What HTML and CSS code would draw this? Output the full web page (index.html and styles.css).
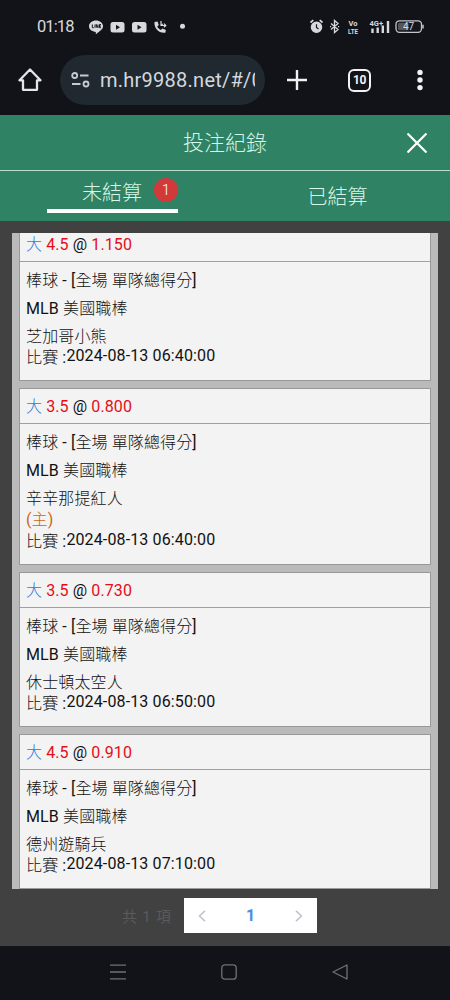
FILE: index.html
```html
<!DOCTYPE html>
<html lang="zh-Hant">
  <head>
    <meta charset="UTF-8" />
    <meta name="viewport" content="width=device-width, initial-scale=1.0" />
    <title>投注紀錄</title>
    <link rel="stylesheet" href="styles.css">
  </head>
  <body>
    <div class="status-bar">
      <span class="clock">01:18</span>
      <svg class="status-left" width="100" height="16" viewBox="0 0 100 16">
        <path fill="#d8d9dc" d="M7 1.5c4 0 7 2.5 7 5.8 0 3.200-3.500 5-6.500 7.400-.6.4-.9.1-.8-.5l.2-1.200C3 12.700 0 10.400 0 7.300 0 4 3 1.500 7 1.500z" />
        <path stroke="#15161b" stroke-width="1" fill="none" d="M3.300 5.500v3.200h1.500M6 5.500v3.200M7.300 8.700V5.500l1.700 3.200V5.500M12 5.500h-1.500v3.200H12M10.500 7.100H12" />
        <rect x="21.500" y="3" width="14" height="10.500" rx="2.500" fill="#d8d9dc" />
        <path d="M27 5.800v5l4-2.500z" fill="#15161b" />
        <rect x="43" y="3" width="14.500" height="10.500" rx="2.500" fill="#d8d9dc" />
        <path d="M48.500 5.800v5l4-2.500z" fill="#15161b" />
        <path fill="#d8d9dc" d="M65.500 3l3-.5 1.300 3.600-1.600 1.500c.9 1.700 2 2.700 3.600 3.500l1.600-1.600 3.500 1.500-.6 2.700c-6 1-11.500-4.500-10.800-10.700z" />
        <path stroke="#d8d9dc" stroke-width="1.200" fill="none" d="M72 2v4.500h4.500M72.300 6.300l1.500-1.500M75 4.700l1.800 1.800L75 8.200" />
        <circle cx="93.500" cy="7.200" r="2.500" fill="#d8d9dc" />
      </svg>
      <svg class="status-right" width="116" height="18" viewBox="0 0 116 18">
        <circle cx="7.500" cy="9.200" r="5" fill="#d8d9dc" stroke="#d8d9dc" stroke-width="1.500" />
        <path d="M7.500 6.200v3.200l2 1.500" fill="none" stroke="#15161b" stroke-width="1.200" />
        <path d="M1.500 4.500L4.300 2.200M13.500 4.500l-2.800-2.300" stroke="#d8d9dc" stroke-width="1.700" />
        <path d="M22 5.500l7 6-3.500 3V2.500l3.500 3-7 6M21 8.600h1.200M29 8.600h1.200" fill="none" stroke="#d8d9dc" stroke-width="1.300" />
        <text class="tiny" x="39.500" y="7.500" textLength="9" lengthAdjust="spacingAndGlyphs">Vo</text>
        <text class="tiny" x="39" y="15.500" textLength="10" lengthAdjust="spacingAndGlyphs">LTE</text>
        <text class="tiny" x="60.500" y="7.500" textLength="13.500" lengthAdjust="spacingAndGlyphs">4G+</text>
        <path d="M63.500 10.500v4.500M68.700 9.500v5.500M73.800 7.500v7.500M79 3v12" stroke="#d8d9dc" stroke-width="2.400" />
        <rect x="87" y="2.800" width="25.500" height="11.500" rx="3.500" fill="#15161b" stroke="#c4c5c8" stroke-width="1.300" />
        <rect x="89" y="4.800" width="10.500" height="7.500" rx="1.500" fill="#55565b" />
        <path d="M114 6.800v3.600" stroke="#c4c5c8" stroke-width="1.500" />
        <text class="battery" x="94" y="12">47</text>
      </svg>
    </div>

    <div class="browser-bar">
      <svg class="home" width="24" height="24" viewBox="0 0 24 24" fill="none" stroke="#e4e6ea" stroke-width="2.300" stroke-linejoin="round">
        <path d="M1.500 12.300H5v9.500h14v-9.500h3.500L12 1.500z" />
      </svg>
      <div class="url">
        <svg width="19" height="16" viewBox="0 0 19 16" fill="none" stroke="#c6cbd2" stroke-width="1.800">
          <circle cx="3.700" cy="3.500" r="2.500" />
          <path d="M9 3.500h8.500M1 12h8.500" />
          <circle cx="15" cy="12" r="2.500" />
        </svg>
        <span class="address">m.hr9988.net/#/0</span>
      </div>
      <svg class="plus" width="20" height="20" viewBox="0 0 20 20" stroke="#f1f2f4" stroke-width="2.400">
        <path d="M10 0v20M0 10h20" />
      </svg>
      <div class="tab-count">10</div>
      <svg class="dots" width="6" height="22" viewBox="0 0 6 22" fill="#f1f2f4">
        <circle cx="3" cy="3.400" r="2.700" />
        <circle cx="3" cy="11" r="2.700" />
        <circle cx="3" cy="18.600" r="2.700" />
      </svg>
    </div>

    <header class="title-bar">
      <h1>投注紀錄</h1>
      <svg class="close" width="20" height="20" viewBox="0 0 20 20" stroke="#fff" stroke-width="2.200">
        <path d="M.5.5l19 19M19.500.5l-19 19" />
      </svg>
    </header>
    <nav class="tabs">
      <div class="tab active"><span class="tab-text">未結算</span><span class="badge">1</span></div>
      <div class="tab"><span class="tab-text">已結算</span></div>
    </nav>

    <main class="content">
      <div class="list">
        <div class="card first">
          <div class="bet"><span class="side">大</span> <b>4.5</b> @ <b>1.150</b></div>
          <div class="info">
            <p><i>棒球</i> - [<i>全場 單隊總得分</i>]</p>
            <p>MLB <i>美國職棒</i></p>
            <p class="team"><i>芝加哥小熊</i></p>
            <p class="match"><i>比賽</i> :<span class="time">2024-08-13 06:40:00</span></p>
          </div>
        </div>
        <div class="card">
          <div class="bet"><span class="side">大</span> <b>3.5</b> @ <b>0.800</b></div>
          <div class="info">
            <p><i>棒球</i> - [<i>全場 單隊總得分</i>]</p>
            <p>MLB <i>美國職棒</i></p>
            <p class="team"><i>辛辛那提紅人</i></p>
            <p class="host">(<i>主</i>)</p>
            <p class="match"><i>比賽</i> :<span class="time">2024-08-13 06:40:00</span></p>
          </div>
        </div>
        <div class="card">
          <div class="bet"><span class="side">大</span> <b>3.5</b> @ <b>0.730</b></div>
          <div class="info">
            <p><i>棒球</i> - [<i>全場 單隊總得分</i>]</p>
            <p>MLB <i>美國職棒</i></p>
            <p class="team"><i>休士頓太空人</i></p>
            <p class="match"><i>比賽</i> :<span class="time">2024-08-13 06:50:00</span></p>
          </div>
        </div>
        <div class="card">
          <div class="bet"><span class="side">大</span> <b>4.5</b> @ <b>0.910</b></div>
          <div class="info">
            <p><i>棒球</i> - [<i>全場 單隊總得分</i>]</p>
            <p>MLB <i>美國職棒</i></p>
            <p class="team"><i>德州遊騎兵</i></p>
            <p class="match"><i>比賽</i> :<span class="time">2024-08-13 07:10:00</span></p>
          </div>
        </div>
      </div>

      <div class="pagination">
        <span class="total">共 1 項</span>
        <div class="pager">
          <svg width="8" height="12" viewBox="0 0 8 12" fill="none" stroke="#c0c4cc" stroke-width="1.600"><path d="M7 .8L1.500 6 7 11.200" /></svg>
          <span class="page">1</span>
          <svg width="8" height="12" viewBox="0 0 8 12" fill="none" stroke="#c0c4cc" stroke-width="1.600"><path d="M1 .8L6.500 6 1 11.200" /></svg>
        </div>
      </div>
    </main>

    <footer class="nav-bar">
      <svg width="16" height="16" viewBox="0 0 16 16" stroke="#707176" stroke-width="1.300"><path d="M0 1.200h16M0 8h16M0 14.800h16" /></svg>
      <svg width="16" height="16" viewBox="0 0 16 16" fill="none" stroke="#707176" stroke-width="1.300"><rect x=".8" y=".8" width="14.400" height="14.400" rx="3" /></svg>
      <svg width="16" height="16" viewBox="0 0 16 16" fill="none" stroke="#707176" stroke-width="1.300" stroke-linejoin="round"><path d="M15 1v14L1 8z" /></svg>
    </footer>
  </body>
</html>
```

FILE: styles.css
```css
* {
  box-sizing: border-box;
}
body {
  margin: 0;
  width: 450px;
  height: 1000px;
  overflow: hidden;
  display: flex;
  flex-direction: column;
  background: #414141;
  font-family: Roboto, "Noto Sans CJK TC", sans-serif;
  font-size: 16px;
  color: #111;
}
h1, p {
  margin: 0;
  font-weight: normal;
}
svg {
  display: block;
  flex: none;
}

/* phone status bar */
.status-bar {
  height: 45px;
  padding: 8px 25px 0 37px;
  display: flex;
  align-items: center;
  background: #121318;
  color: #d8d9dc;
}
.clock {
  width: 52px;
  font-size: 16.5px;
  line-height: 18px;
  letter-spacing: -0.9px;
  white-space: nowrap;
}
.status-right {
  margin-left: auto;
}
.tiny {
  font-size: 6.8px;
  font-weight: bold;
  fill: #d8d9dc;
}
.battery {
  font-size: 10px;
  fill: #d8d9dc;
}

/* browser toolbar */
.browser-bar {
  height: 70px;
  padding: 0 27px 0 18px;
  display: flex;
  align-items: center;
  background: #121318;
}
.url {
  width: 205px;
  height: 50px;
  margin-left: 18px;
  padding: 0 10px 0 11px;
  display: flex;
  align-items: center;
  border-radius: 25px;
  background: #202830;
}
.address {
  width: 155px;
  margin-left: 10px;
  overflow: hidden;
  white-space: nowrap;
  font-size: 20px;
  letter-spacing: 0.25px;
  color: #d3d8df;
}
.plus {
  margin-left: 22px;
}
.tab-count {
  width: 23px;
  height: 23px;
  margin-left: 41px;
  border: 2.500px solid #f1f2f4;
  border-radius: 6px;
  color: #f1f2f4;
  font-size: 12px;
  font-weight: bold;
  line-height: 19px;
  letter-spacing: -0.3px;
  text-align: center;
}
.dots {
  margin-left: auto;
}

/* page header */
.title-bar {
  height: 56px;
  padding: 0 23px 0 183px;
  display: flex;
  align-items: center;
  justify-content: space-between;
  border-bottom: 1px solid #b9e0cc;
  background: #308265;
}
.title-bar h1 {
  font-size: 21px;
  font-weight: 300;
  line-height: 30px;
  color: #d7f7e8;
}
.tabs {
  height: 50px;
  display: flex;
  background: #308265;
}
.tab {
  width: 225px;
  padding-top: 11px;
  text-align: center;
  font-size: 20px;
  font-weight: 300;
  line-height: 30px;
  color: #d7f7e8;
}
.tab.active {
  width: 131px;
  height: 42px;
  margin: 0 47px;
  padding: 7px 0 0 35px;
  display: flex;
  border-bottom: 4px solid #fff;
}
.badge {
  width: 24px;
  height: 24px;
  margin: 0 0 0 12px;
  border-radius: 50%;
  background: #d23a3a;
  color: #fff;
  font-size: 15px;
  line-height: 24px;
}

/* bet list */
.content {
  height: 725px;
  padding: 12px 12px 0;
}
.list {
  width: 426px;
  height: 656px;
  padding: 0 7px;
  overflow: hidden;
  background: #bababa;
}
.card {
  margin-bottom: 7px;
  padding-bottom: 11px;
  border: 1px solid #999;
  background: #f3f3f3;
}
.card.first {
  margin-top: -7px;
}
.bet {
  height: 35px;
  padding-left: 6px;
  border-bottom: 1px solid #a0a0a0;
  line-height: 36px;
  letter-spacing: 0.1px;
}
.bet b {
  font-weight: normal;
  color: #e60c18;
}
.side {
  font-weight: 300;
  color: #2f78dc;
}
.info {
  padding: 5px 6px 0;
}
.info p {
  height: 28px;
  line-height: 28px;
  letter-spacing: 0.13px;
  white-space: nowrap;
}
.info i {
  font-style: normal;
  font-weight: 300;
}
.info .team {
  height: 21px;
  margin-top: 3px;
  line-height: 22px;
}
.info .host,
.info .match {
  height: 22px;
  line-height: 22px;
}
.info .host {
  color: #cb6612;
}
.time {
  position: relative;
  top: -2px;
}

/* pagination */
.pagination {
  padding: 9px 0 0 110px;
  display: flex;
  align-items: center;
}
.total {
  width: 62px;
  font-size: 15px;
  letter-spacing: 0.8px;
  color: #5a5a5a;
  white-space: nowrap;
}
.pager {
  width: 133px;
  height: 35px;
  padding: 0 14px;
  display: flex;
  align-items: center;
  justify-content: space-between;
  background: #fff;
}
.page {
  font-size: 16px;
  font-weight: bold;
  color: #4a8de8;
}

.nav-bar {
  height: 54px;
  padding: 0 102px 2px 110px;
  display: flex;
  align-items: center;
  justify-content: space-between;
  background: #121318;
}
```
